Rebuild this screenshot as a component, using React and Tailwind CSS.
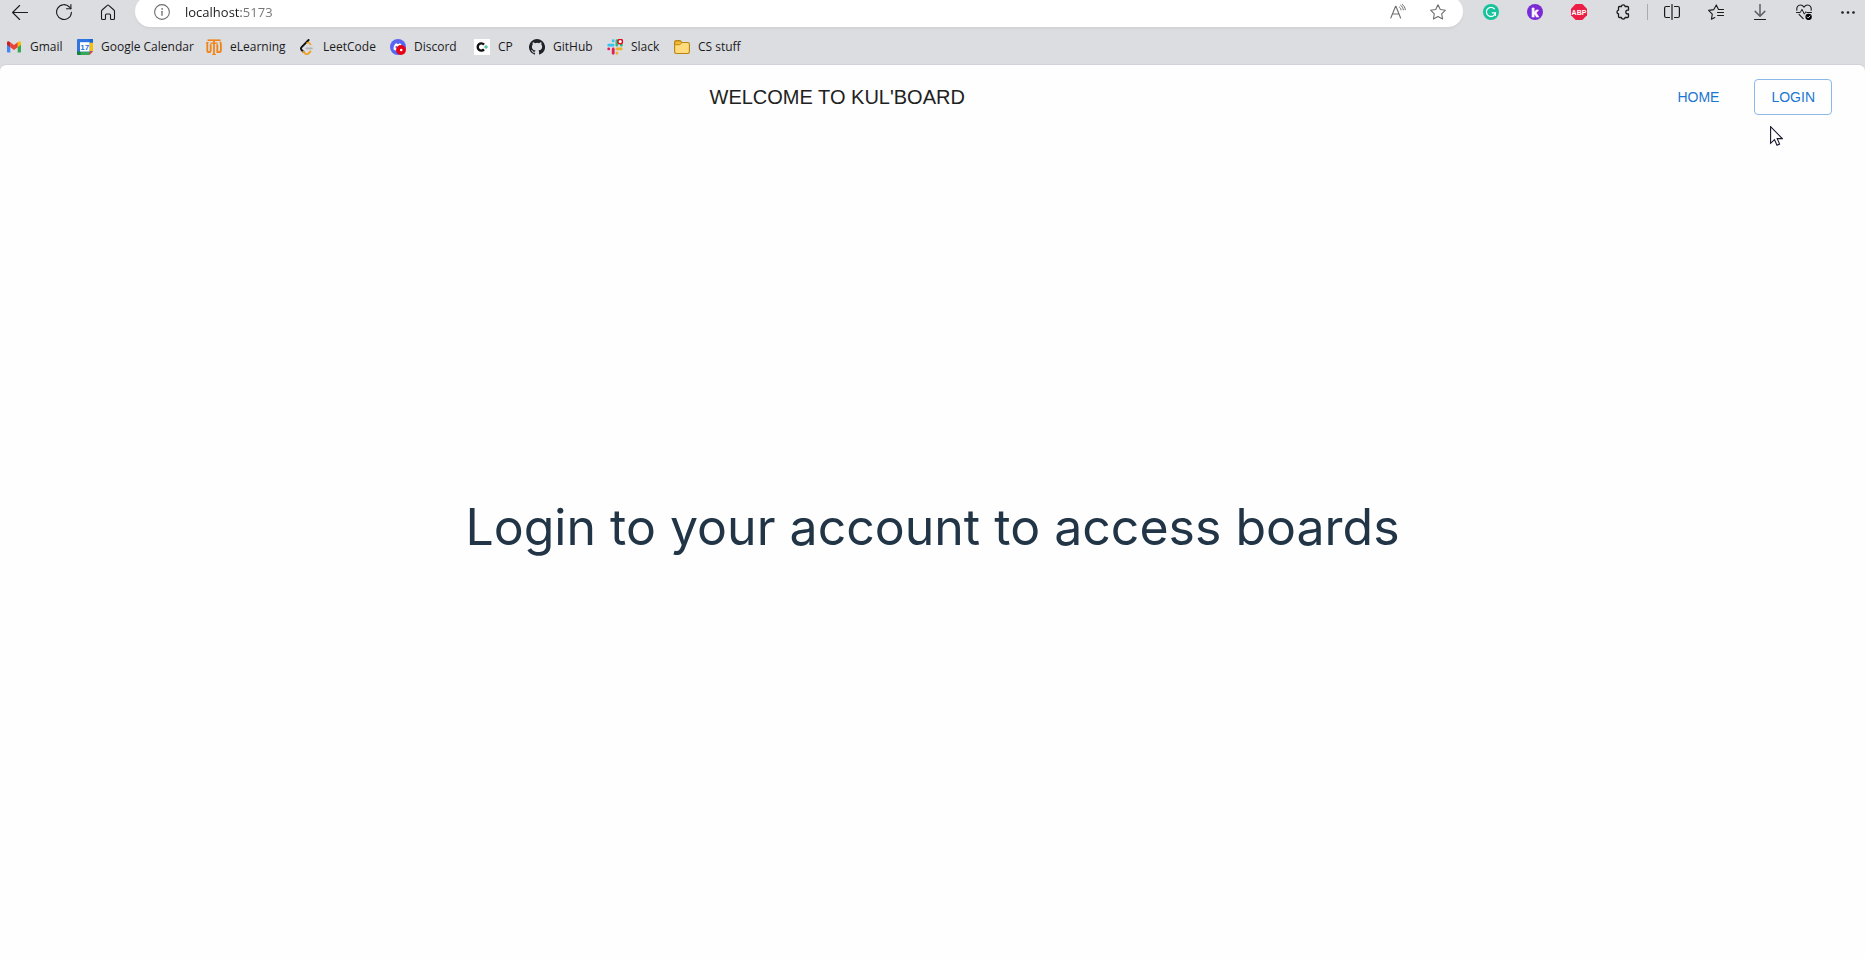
import React from "react";

function Icon({ children, className = "h-4 w-4", viewBox = "0 0 16 16" }) {
  return (
    <svg
      viewBox={viewBox}
      className={`shrink-0 ${className}`}
      fill="none"
      stroke="currentColor"
      strokeWidth="1.1"
      strokeLinecap="round"
      strokeLinejoin="round"
      aria-hidden="true"
    >
      {children}
    </svg>
  );
}

const BackIcon = () => (
  <Icon>
    <path d="M15.5 8.5H.6M7.6 1.5.6 8.5l7 7" />
  </Icon>
);

const ReloadIcon = () => (
  <Icon>
    <path d="M15.4 8.4a7.4 7.4 0 1 1-2-5.4l1.4 1.6" />
    <path d="M14.9.6v4.2h-4.4" />
  </Icon>
);

const HomeIcon = () => (
  <Icon>
    <path d="M1.5 7.2c0-.5.2-.9.6-1.2L7.3 1.3c.4-.4 1-.4 1.4 0L13.9 6c.4.3.6.7.6 1.2v7.3c0 .6-.4 1-1 1h-2c-.6 0-1-.4-1-1V11c0-.6-.4-1-1-1h-3c-.6 0-1 .4-1 1v3.5c0 .6-.4 1-1 1h-2c-.6 0-1-.4-1-1z" />
  </Icon>
);

const InfoIcon = () => (
  <Icon>
    <circle cx="8" cy="8" r="7.4" />
    <path d="M8 7.3v4" strokeWidth="1.3" />
    <circle cx="8" cy="4.9" r=".5" fill="currentColor" strokeWidth=".6" />
  </Icon>
);

const ReadAloudIcon = () => (
  <Icon>
    <path d="M.8 14 5.6 2.2h.3L10.6 14M2.5 10h6.4" />
    <path d="M9.6 3.2c.8.6 1.300 1.500 1.400 2.700M10.600 1.200c1.600 1.100 2.500 2.700 2.700 4.700M12.200.4c1.800 1.200 2.900 3 3.100 5.300" strokeWidth="1" />
  </Icon>
);

const StarIcon = () => (
  <Icon>
    <path d="m8 .8 2.3 4.700 5.100.7-3.700 3.600.9 5.200L8 12.500 3.400 15l.9-5.200L.6 6.200l5.100-.7z" />
  </Icon>
);

const GrammarlyIcon = () => (
  <Icon>
    <circle cx="8" cy="8" r="8" fill="#15c39a" stroke="none" />
    <path d="M11.300 4.700a4.600 4.600 0 1 0 1.200 4.100H9.200" stroke="#fff" strokeWidth="1.300" />
    <path d="M12.500 8.800v2.600" stroke="#fff" strokeWidth="1.100" />
  </Icon>
);

const KIcon = () => (
  <Icon>
    <circle cx="8" cy="8" r="8" fill="#7b2bd4" stroke="none" />
    <text x="4.300" y="13" fill="#fff" stroke="#fff" strokeWidth=".6" fontSize="13" fontWeight="700" fontFamily="Liberation Sans, sans-serif">
      k
    </text>
  </Icon>
);

const AdblockIcon = () => (
  <Icon>
    <path d="M4.700 0h6.600L16 4.700v6.600L11.300 16H4.700L0 11.300V4.700z" fill="#ed1e45" stroke="none" />
    <text x="8" y="10.500" textAnchor="middle" fill="#fff" stroke="none" fontSize="7" fontWeight="700" fontFamily="Liberation Sans, sans-serif">
      ABP
    </text>
  </Icon>
);

const PuzzleIcon = () => (
  <Icon>
    <path
      d="M4.500 2.500h1.800a2 2 0 0 1 3.900 0h2.300c.6 0 1 .4 1 1v2.700h-.8a1.900 1.900 0 0 0 0 3.800h.8v2.500c0 .6-.4 1-1 1h-2.300a2 2 0 0 1-3.900 0H4.500c-.6 0-1-.4-1-1V10a2 2 0 0 1 0-3.900V3.500c0-.6.4-1 1-1z"
      strokeWidth="1.300"
    />
  </Icon>
);

const SplitIcon = () => (
  <Icon>
    <path d="M5.500 2.500H2.200C1.300 2.500.6 3.200.6 4v8c0 .8.7 1.500 1.600 1.500h3.300M10.500 2.500h3.300c.9 0 1.600.7 1.600 1.500v8c0 .8-.7 1.500-1.600 1.500h-3.300M8 .5v15" strokeWidth="1.200" />
  </Icon>
);

const FavoritesIcon = () => (
  <Icon>
    <path d="M15.500 5.500h-5L8.300.9 5.800 5.600l-5.200.8 3.700 3.700-.9 5.200 3.400-1.800" />
    <path d="M9.500 8.500h6M9.500 11.500h6" />
  </Icon>
);

const DownloadIcon = () => (
  <Icon>
    <path d="M8 .5v11.300M3.200 7.400 8 12.200l4.800-4.800" stroke="#5b5f68" strokeWidth="1.500" />
    <path d="M2.500 15.500h11" strokeWidth="1.200" />
  </Icon>
);

const HealthIcon = () => (
  <Icon>
    <path d="M.9 6.300C.3 3.400 2 1 4.400 1 5.900 1 7.100 1.800 8 3.100 8.900 1.800 10.100 1 11.600 1c2.400 0 4.100 2.400 3.500 5.300M3 10.300l4.200 4.400" />
    <path d="M.5 8.500h3.800L6 5.300l2.300 4.900 1.500-2.500.8.800h4.900" strokeWidth="1" />
    <circle cx="12.600" cy="12.900" r="3.200" fill="#000" stroke="none" />
    <path d="m11.300 13 .9.900 1.800-1.900" stroke="#dcdde1" strokeWidth="1" />
  </Icon>
);

const MoreIcon = () => (
  <Icon>
    <g fill="currentColor" stroke="none">
      <circle cx="2.500" cy="8.500" r="1.300" />
      <circle cx="8" cy="8.500" r="1.300" />
      <circle cx="13.500" cy="8.500" r="1.300" />
    </g>
  </Icon>
);

const GmailIcon = () => (
  <Icon>
    <g stroke="none">
      <path d="M1 4.500 4.300 7v6.500H2c-.6 0-1-.4-1-1z" fill="#4285f4" />
      <path d="M15 4.500 11.700 7v6.500H14c.6 0 1-.4 1-1z" fill="#34a853" />
      <path d="M11.700 3.300 13 2.400c.9-.5 2 .1 2 1.200v2.100l-3.300 2.500z" fill="#fbbc04" />
      <path d="M4.300 8.200V3.300L8 6.100l3.700-2.800v4.900L8 11z" fill="#ea4335" />
      <path d="M1 3.600v2.100l3.300 2.500V3.300L3 2.400c-.9-.5-2 .1-2 1.200z" fill="#c5221f" />
    </g>
  </Icon>
);

const CalendarIcon = () => (
  <Icon>
    <g stroke="none">
      <path d="M1.200 0h13.600c.7 0 1.200.5 1.200 1.200V12l-4 4H1.200C.5 16 0 15.500 0 14.800V1.200C0 .5.5 0 1.200 0z" fill="#2f74e0" />
      <path d="M12.500 3.500H16V12h-3.500z" fill="#fbbc04" />
      <path d="M12.500 0H16v3.500h-3.500z" fill="#1967d2" />
      <path d="M3.500 12.500h9V16h-9z" fill="#34a853" />
      <path d="M0 12.500h3.500V16H1.200C.5 16 0 15.500 0 14.800z" fill="#188038" />
      <path d="M12.500 12.500H16L12.500 16z" fill="#ea4335" />
      <path d="M3 3.200h9.500v9.300H3z" fill="#fff" />
      <text x="7.800" y="10.800" textAnchor="middle" fill="#2a71dc" fontSize="8" fontWeight="700" fontFamily="Liberation Sans, sans-serif">
        17
      </text>
    </g>
  </Icon>
);

const UtdIcon = () => (
  <Icon>
    <g stroke="#f08419" strokeWidth="1.800" strokeLinecap="butt">
      <path d="M1.300 3.600v7.900c0 1.100.7 1.700 1.700 1.700s1.700-.6 1.700-1.700V5.200" />
      <path d="M11.300 5.200v8h1.600c1.300 0 2-.7 2-1.900V4.900c0-.8-.4-1.400-1.100-1.700" />
      <path d="M8 2v13.800" />
      <path d="M1.500 1.200h13" strokeWidth="1.600" />
      <path d="M4.500 4.200h7" strokeWidth="1.300" />
      <path d="M0 3.600h2.600M6 15.500h4" strokeWidth="1" />
    </g>
  </Icon>
);

const LeetCodeIcon = () => (
  <Icon>
    <path d="m9.600 1-7 7.100c-.9.900-.9 2 0 2.900l2 2" stroke="#111" strokeWidth="1.900" />
    <path d="M11.600 5.400 10 3.900c-.6-.5-1.400-.5-2 0" stroke="#f0a020" strokeWidth="1.500" />
    <path d="m4.300 12.700 2 2c.8.8 2.100.8 2.900 0l2.200-2.200" stroke="#f0a020" strokeWidth="1.900" />
    <path d="M7.500 9.300h5.500" stroke="#b3b3b3" strokeWidth="1.700" />
  </Icon>
);

const DiscordIcon = () => (
  <Icon>
    <circle cx="8" cy="8" r="8" fill="#5865f2" stroke="none" />
    <path d="M5.200 4.700 6.800 4.300l.4.600h1.600l.4-.6 1.600.4c1.300 1.800 1.800 3.800 1.600 5.800-.8.600-1.600.9-2.200 1l-.6-1H6.400l-.6 1c-.7-.1-1.500-.4-2.200-1-.2-2 .3-4 1.600-5.800z" fill="#fff" stroke="none" />
    <ellipse cx="6.300" cy="8" rx="1" ry="1.100" fill="#5865f2" stroke="none" />
    <circle cx="11" cy="11" r="4.900" fill="#e60012" stroke="none" />
    <circle cx="11.200" cy="11" r="1.300" fill="#fff" stroke="none" />
  </Icon>
);

const CpIcon = () => (
  <Icon>
    <path d="M0 0h16v16H0z" fill="#fff" stroke="none" />
    <path d="M10 5.600a3.600 3.600 0 1 0 0 4.800" stroke="#111" strokeWidth="2.400" strokeLinecap="butt" />
    <path d="M10.200 8h3.600M12 6.200v3.600" stroke="#52c49a" strokeWidth="1.600" strokeLinecap="butt" />
  </Icon>
);

const GitHubIcon = () => (
  <Icon>
    <path
      d="M8 0a8 8 0 0 0-2.530 15.590c.4.070.55-.17.550-.38v-1.490c-2.010.370-2.530-.49-2.690-.94-.09-.23-.48-.94-.82-1.130-.28-.15-.68-.52-.01-.53.630-.01 1.080.580 1.230.82.720 1.210 1.870.87 2.330.66.070-.52.280-.87.510-1.070-1.780-.2-3.640-.89-3.640-3.950 0-.87.310-1.590.820-2.150-.08-.2-.36-1.020.080-2.120 0 0 .67-.21 2.200.82a7.600 7.600 0 0 1 4 0c1.530-1.040 2.200-.82 2.200-.82.440 1.100.160 1.920.080 2.120.510.560.820 1.270.820 2.150 0 3.070-1.870 3.750-3.650 3.950.290.250.540.730.540 1.480v2.200c0 .21.150.460.550.380A8 8 0 0 0 8 0z"
      fill="#1f2328"
      stroke="none"
    />
  </Icon>
);

const SlackIcon = () => (
  <Icon>
    <g strokeWidth="2.800">
      <path d="M1.700 6.200h4.400M6.200 1.700v.2" stroke="#36c5f0" />
      <path d="M9.900 1.700v4.500M14.300 6.200h.1" stroke="#2eb67d" />
      <path d="M9.900 9.900h4.400M9.900 14.200v.1" stroke="#ecb22e" />
      <path d="M6.200 9.900v4.400M1.700 9.900h.1" stroke="#e01e5a" />
    </g>
    <circle cx="13.200" cy="2.600" r="2.300" fill="#fff" stroke="#e60012" strokeWidth="1.400" />
  </Icon>
);

const FolderIcon = () => (
  <Icon>
    <path d="M.6 3.200c0-1 .7-1.700 1.700-1.700h2.900c.5 0 .9.200 1.200.5l1.500 1.500h5.800c1 0 1.700.7 1.700 1.700v7.600c0 1-.7 1.700-1.700 1.700H2.300c-1 0-1.700-.7-1.700-1.700z" fill="#ffdb7d" stroke="#b98411" />
    <path d="M.8 5.700h4.500c.5 0 .9-.2 1.200-.5l1.300-1.600L6.200 2H2.300C1.500 2 1 2.500 1 3.200z" fill="#f0bb3c" stroke="#b98411" strokeWidth=".9" />
  </Icon>
);

const bookmarks = [
  { label: "Gmail", icon: GmailIcon, width: "w-[71px]" },
  { label: "Google Calendar", icon: CalendarIcon, width: "w-[129px]" },
  { label: "eLearning", icon: UtdIcon, width: "w-[93px]" },
  { label: "LeetCode", icon: LeetCodeIcon, width: "w-[91px]" },
  { label: "Discord", icon: DiscordIcon, width: "w-[84px]" },
  { label: "CP", icon: CpIcon, width: "w-[55px]" },
  { label: "GitHub", icon: GitHubIcon, width: "w-[78px]" },
  { label: "Slack", icon: SlackIcon, width: "w-[67px]" },
  { label: "CS stuff", icon: FolderIcon, width: "w-[80px]" },
];

function ToolButton({ label, icon: Glyph }) {
  return (
    <button type="button" aria-label={label} className="flex h-6 w-6 shrink-0 items-center justify-center">
      <Glyph />
    </button>
  );
}

function AddressBar() {
  return (
    <form
      onSubmit={(event) => event.preventDefault()}
      className="ml-[15px] flex h-full min-w-0 flex-1 items-center rounded-full bg-white pr-[13px] pl-[15px] text-[#6e6e70] shadow-[0_2px_2px_#d2d3d7]"
    >
      <ToolButton label="View site information" icon={InfoIcon} />
      <input
        type="text"
        aria-label="Address"
        defaultValue="localhost:5173"
        spellCheck={false}
        className="ml-[11px] min-w-0 flex-1 bg-[linear-gradient(90deg,#1b1b1b_56px,#737373_56px)] bg-clip-text text-[13px] leading-5 text-transparent outline-none"
      />
      <div className="flex gap-4">
        <ToolButton label="Read aloud" icon={ReadAloudIcon} />
        <ToolButton label="Add to favorites" icon={StarIcon} />
      </div>
    </form>
  );
}

function BrowserChrome() {
  return (
    <header className="overflow-hidden bg-[#dcdde1] font-['Open_Sans','Noto_Sans',sans-serif] text-[#1b1b1b]">
      <div className="-mt-1 flex h-[31px] items-center pr-[5px] pl-2">
        <div className="flex gap-5">
          <ToolButton label="Back" icon={BackIcon} />
          <ToolButton label="Refresh" icon={ReloadIcon} />
          <ToolButton label="Home" icon={HomeIcon} />
        </div>
        <AddressBar />
        <div className="ml-4 flex gap-5">
          <ToolButton label="Grammarly" icon={GrammarlyIcon} />
          <ToolButton label="K extension" icon={KIcon} />
          <ToolButton label="Adblock Plus" icon={AdblockIcon} />
          <ToolButton label="Extensions" icon={PuzzleIcon} />
        </div>
        <span className="mx-3 h-4 w-px bg-[#a9abb0]" />
        <div className="flex gap-5">
          <ToolButton label="Split screen" icon={SplitIcon} />
          <ToolButton label="Favorites" icon={FavoritesIcon} />
          <ToolButton label="Downloads" icon={DownloadIcon} />
          <ToolButton label="Browser essentials" icon={HealthIcon} />
          <ToolButton label="Settings and more" icon={MoreIcon} />
        </div>
      </div>
      <nav aria-label="Favorites bar" className="flex h-[38px] items-center pt-px pl-1.5">
        {bookmarks.map(({ label, icon: Glyph, width }) => (
          <a key={label} href="#" className={`flex shrink-0 items-center gap-2 text-xs whitespace-nowrap ${width}`}>
            <Glyph />
            {label}
          </a>
        ))}
      </nav>
    </header>
  );
}

function Pointer() {
  return (
    <svg viewBox="0 0 13 20" className="pointer-events-none absolute top-[61px] right-[82px] h-5 w-[13px]" aria-hidden="true">
      <path d="M.6.700v16.600l3.900-3.700 2.500 5.600 2.600-1.100-2.400-5.500h5.100z" fill="#fff" stroke="#15152b" strokeWidth="1.100" />
    </svg>
  );
}

function AppBar() {
  return (
    <div className="relative flex h-16 items-center pr-[33px] pl-6 font-['Liberation_Sans',Arial,sans-serif]">
      <h1 className="flex-1 text-center text-xl text-[#212121]">WELCOME TO KUL'BOARD</h1>
      <nav aria-label="Main" className="ml-4 flex gap-6 text-sm text-[#1976d2]">
        <button type="button" className="h-9 w-16">
          HOME
        </button>
        <button type="button" className="h-9 rounded border border-[#8cbae8] px-4">
          LOGIN
        </button>
      </nav>
      <Pointer />
    </div>
  );
}

export default function App() {
  return (
    <div className="flex min-h-screen flex-col bg-[#dcdde1]">
      <BrowserChrome />
      <div className="flex flex-1 flex-col rounded-t-md bg-[#fefefe] shadow-[0_-1px_1px_#d0d1d6]">
        <AppBar />
        <main className="flex flex-1 items-center justify-center pb-[34px]">
          <p className="font-['Inter',sans-serif] text-[50px] leading-[76px] text-[#213547]">
            Login to your account to access boards
          </p>
        </main>
      </div>
    </div>
  );
}
